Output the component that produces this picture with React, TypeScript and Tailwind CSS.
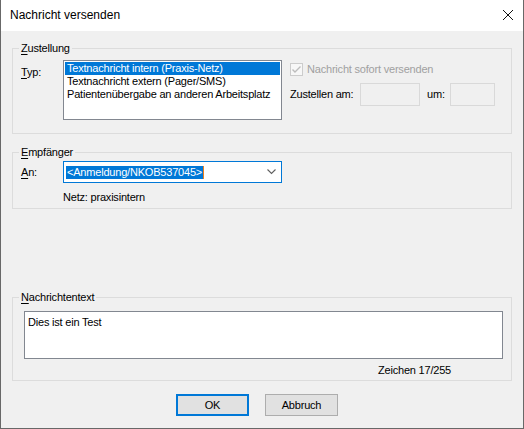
import React from 'react';

const GroupBox: React.FC<{ label: React.ReactNode; className?: string; children: React.ReactNode }> = ({ label, className, children }) => (
  <div className={`relative border border-[#dcdcdc] ${className ?? ''}`}>
    <span className="absolute -top-[7px] left-[6px] bg-[#f0f0f0] px-[2px] leading-[13px]">{label}</span>
    {children}
  </div>
);

const U: React.FC<{ children: React.ReactNode }> = ({ children }) => <span className="underline underline-offset-[2px]">{children}</span>;

export default function App() {
  const items = ['Textnachricht intern (Praxis-Netz)', 'Textnachricht extern (Pager/SMS)', 'Patientenübergabe an anderen Arbeitsplatz'];

  return (
    <div
      className="w-[524px] h-[429px] flex flex-col border-x border-b border-[#686868] bg-[#f0f0f0] text-[11px] leading-[13px] tracking-[-0.2px] text-black overflow-hidden"
      style={{ fontFamily: '"Liberation Sans", Arial, sans-serif' }}
    >
      {/* Title bar */}
      <div className="h-[31px] shrink-0 bg-white flex items-center justify-between pl-[9px] pr-[9px]">
        <span className="text-[12px] tracking-normal">Nachricht versenden</span>
        <svg width="12" height="12" viewBox="0 0 12 12" className="mt-[-1px]">
          <path d="M1 1 L11 11 M11 1 L1 11" stroke="#111" strokeWidth="1" fill="none" />
        </svg>
      </div>

      <div className="flex-1 px-[11px] pt-[17px]">
        {/* Zustellung */}
        <GroupBox label={<><U>Z</U>ustellung</>} className="h-[86px]">
          <div className="flex pt-[11px] pl-[8px]">
            <div className="w-[42px] mt-[6px]"><U>T</U>yp:</div>
            <div className="w-[219px] h-[60px] border border-[#828790] bg-white p-[1px]">
              {items.map((t, i) => (
                <div key={t} className={`h-[13px] pl-[2px] whitespace-nowrap ${i === 0 ? 'bg-[#0078d7] text-white' : ''}`}>{t}</div>
              ))}
            </div>
            <div className="ml-[8px] flex flex-col">
              <div className="flex items-center h-[13px] mt-[3px]">
                <span className="w-[13px] h-[13px] border border-[#cccccc] bg-[#f7f7f7] flex items-center justify-center">
                  <svg width="11" height="11" viewBox="0 0 11 11">
                    <path d="M1.5 5.5 L4 8 L9.5 2.5" stroke="#bcbcbc" strokeWidth="1.4" fill="none" />
                  </svg>
                </span>
                <span className="ml-[4px] text-[#a0a0a0]">Nachricht sofort versenden</span>
              </div>
              <div className="flex items-center mt-[7px]">
                <span className="w-[70px]">Zustellen am:</span>
                <span className="w-[60px] h-[23px] border border-[#d9d9d9]" />
                <span className="ml-[7px] w-[23px]">um:</span>
                <span className="w-[45px] h-[23px] border border-[#d9d9d9]" />
              </div>
            </div>
          </div>
        </GroupBox>

        {/* Empfänger */}
        <GroupBox label={<><U>E</U>mpfänger</>} className="mt-[18px] h-[57px]">
          <div className="flex items-center pt-[8px] pl-[8px]">
            <div className="w-[42px]"><U>A</U>n:</div>
            <div className="w-[219px] h-[22px] border border-[#0078d7] bg-white flex items-center pl-[2px] pr-[5px]">
              <span className="bg-[#0078d7] text-white px-[1px] leading-[13px] whitespace-nowrap">&lt;Anmeldung/NKOB537045&gt;</span>
              <span className="w-[1px] h-[13px] bg-[#f0801a]" />
              <svg width="9" height="6" viewBox="0 0 9 6" className="ml-auto">
                <path d="M0.5 0.5 L4.5 4.5 L8.5 0.5" stroke="#606060" strokeWidth="1.1" fill="none" />
              </svg>
            </div>
          </div>
          <div className="pl-[50px] mt-[8px]">Netz: praxisintern</div>
        </GroupBox>

        {/* Nachrichtentext */}
        <GroupBox label={<><U>N</U>achrichtentext</>} className="mt-[88px] h-[84px]">
          <div className="pt-[13px] pl-[11px]">
            <div className="w-[479px] h-[48px] border border-[#828790] bg-white px-[3px] pt-[4px]">Dies ist ein Test</div>
            <div className="pl-[354px] mt-[5px]">Zeichen 17/255</div>
          </div>
        </GroupBox>

        {/* Buttons */}
        <div className="flex gap-[16px] mt-[13px] pl-[164px]">
          <button className="w-[73px] h-[22px] border-2 border-[#0078d7] bg-[#e1e1e1] leading-[13px]">OK</button>
          <button className="w-[73px] h-[22px] border border-[#adadad] bg-[#e1e1e1] leading-[13px]">Abbruch</button>
        </div>
      </div>
    </div>
  );
}
